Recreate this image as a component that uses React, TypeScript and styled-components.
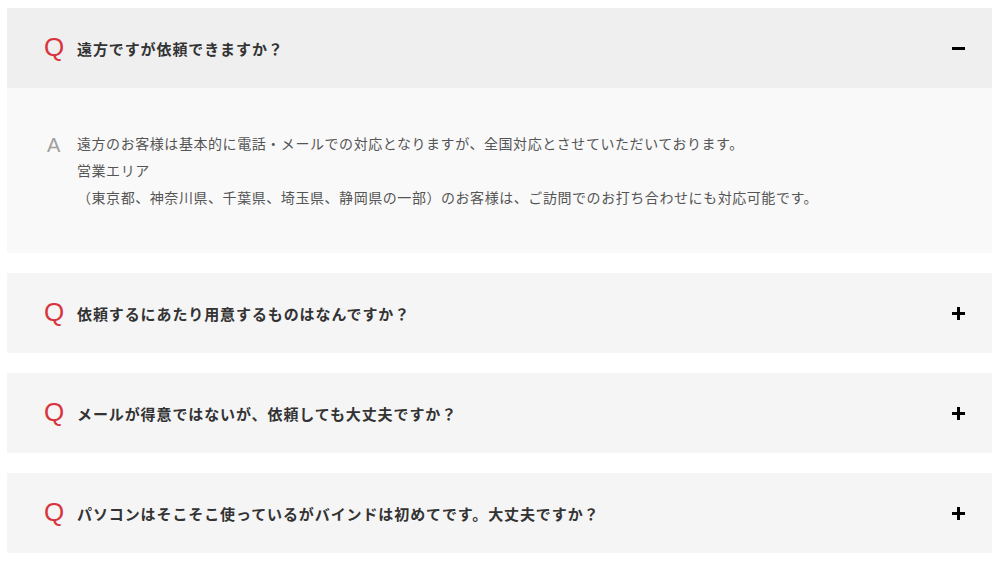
import styled, { createGlobalStyle } from "styled-components";

const GlobalStyle = createGlobalStyle`
  body {
    margin: 0;
    background: #ffffff;
    font-family: "Noto Sans CJK JP", "Noto Sans", sans-serif;
  }
`;

type Faq = {
  question: string;
  answer?: string[];
};

const faqs: Faq[] = [
  {
    question: "遠方ですが依頼できますか？",
    answer: [
      "遠方のお客様は基本的に電話・メールでの対応となりますが、全国対応とさせていただいております。",
      "営業エリア",
      "（東京都、神奈川県、千葉県、埼玉県、静岡県の一部）のお客様は、ご訪問でのお打ち合わせにも対応可能です。",
    ],
  },
  { question: "依頼するにあたり用意するものはなんですか？" },
  { question: "メールが得意ではないが、依頼しても大丈夫ですか？" },
  { question: "パソコンはそこそこ使っているがバインドは初めてです。大丈夫ですか？" },
];

const App = () => {
  return (
    <>
      <GlobalStyle />
      <List>
        {faqs.map((faq) => (
          <Item key={faq.question}>
            <Header open={!!faq.answer}>
              <QMark>Q</QMark>
              <Question>{faq.question}</Question>
              <Toggle>{faq.answer ? <Bar /> : <><Bar /><Bar vertical /></>}</Toggle>
            </Header>
            {faq.answer && (
              <Answer>
                <AMark>A</AMark>
                <AnswerText>
                  {faq.answer.map((line) => (
                    <p key={line}>{line}</p>
                  ))}
                </AnswerText>
              </Answer>
            )}
          </Item>
        ))}
      </List>
    </>
  );
};

const List = styled.div`
  display: flex;
  flex-direction: column;
  gap: 20px;
  padding: 8px 8px 0 7px;
`;

const Item = styled.div`
  display: flex;
  flex-direction: column;
`;

const Header = styled.div<{ open: boolean }>`
  display: flex;
  align-items: center;
  height: 80px;
  padding: 0 27px 0 37px;
  background: ${(p) => (p.open ? "#efefef" : "#f5f5f5")};
`;

const QMark = styled.span`
  width: 33px;
  font-family: "Liberation Sans", sans-serif;
  font-size: 26px;
  line-height: 1;
  color: #d8343d;
  margin-top: -2px;
`;

const Question = styled.span`
  flex: 1;
  font-size: 15px;
  font-weight: 700;
  letter-spacing: 0.06em;
  color: #333333;
`;

const Toggle = styled.span`
  position: relative;
  width: 13px;
  height: 13px;
`;

const Bar = styled.span<{ vertical?: boolean }>`
  position: absolute;
  background: #000000;
  ${(p) =>
    p.vertical
      ? "left: 5px; top: 0; width: 3px; height: 13px;"
      : "left: 0; top: 5px; width: 13px; height: 3px;"}
`;

const Answer = styled.div`
  display: flex;
  align-items: flex-start;
  height: 165px;
  box-sizing: border-box;
  padding: 42px 27px 0 40px;
  background: #f9f9f9;
`;

const AMark = styled.span`
  width: 30px;
  font-family: "Liberation Sans", sans-serif;
  font-size: 20px;
  font-weight: 300;
  line-height: 27px;
  color: #a0a0a0;
  margin-top: 2px;
`;

const AnswerText = styled.div`
  font-size: 14px;
  line-height: 27px;
  letter-spacing: 0.04em;
  color: #555555;

  p {
    margin: 0;
  }
`;

export default App;
